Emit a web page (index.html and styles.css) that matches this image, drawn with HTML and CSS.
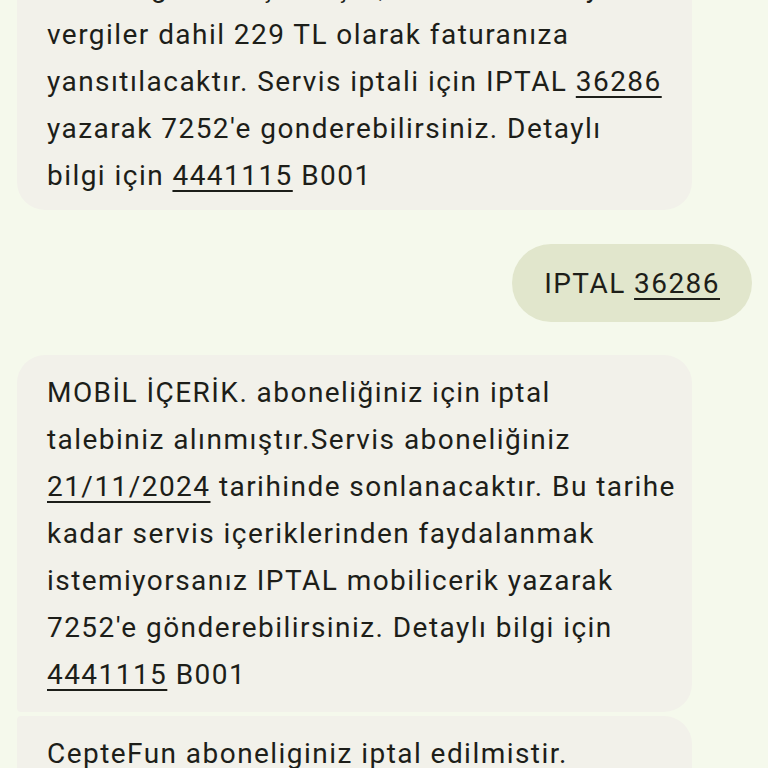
FILE: index.html
```html
<!DOCTYPE html>
<html lang="tr">
<head>
<meta charset="utf-8">
<link rel="stylesheet" href="styles.css">
</head>
<body>
<div class="thread">
  <div class="bubble recv first">
    <p class="msg">Aboneliğiniz başlamıştır, ücret haftalık y<br>vergiler dahil 229 TL olarak faturanıza<br>yansıtılacaktır. Servis iptali için IPTAL <u>36286</u><br>yazarak 7252'e gonderebilirsiniz. Detaylı<br>bilgi için <u>4441115</u> B001</p>
  </div>
  <div class="row-sent">
    <div class="bubble sent"><p class="msg">IPTAL <u>36286</u></p></div>
  </div>
  <div class="group">
    <div class="bubble recv top">
      <p class="msg">MOBİL İÇERİK. aboneliğiniz için iptal<br>talebiniz alınmıştır.Servis aboneliğiniz<br><u>21/11/2024</u> tarihinde sonlanacaktır. Bu tarihe<br>kadar servis içeriklerinden faydalanmak<br>istemiyorsanız IPTAL mobilicerik yazarak<br>7252'e gönderebilirsiniz. Detaylı bilgi için<br><u>4441115</u> B001</p>
    </div>
    <div class="bubble recv bottom">
      <p class="msg">CepteFun aboneliginiz iptal edilmistir.<br>Bilgi için 4441115</p>
    </div>
  </div>
</div>
</body>
</html>
```
FILE: styles.css
```css
html, body {
  margin: 0;
  padding: 0;
  background: #f5f9ec;
  height: 768px;
  overflow: hidden;
}
.thread {
  display: flex;
  flex-direction: column;
  padding: 0 16px 0 17px;
  margin-top: -50px;
}
.msg {
  margin: 0;
  font-family: Roboto, "Noto Sans", sans-serif;
  font-size: 28px;
  letter-spacing: 1.45px;
  line-height: 47px;
  color: #1d1e19;
  white-space: nowrap;
}
.msg u {
  text-decoration-thickness: 2px;
  text-underline-offset: 5px;
}
.bubble {
  box-sizing: border-box;
}
.recv {
  width: 675px;
  background: #f2f1ea;
  padding: 14px 30px;
}
.first {
  border-radius: 28px;
  padding-bottom: 11px;
}
.row-sent {
  display: flex;
  justify-content: flex-end;
  margin-top: 34px;
}
.sent {
  background: #e1e6cc;
  border-radius: 40px;
  height: 78px;
  padding: 0 32px;
  display: flex;
  align-items: center;
}
.group {
  display: flex;
  flex-direction: column;
  gap: 4px;
  margin-top: 33px;
}
.top {
  border-radius: 28px 28px 28px 4px;
}
.bottom {
  border-radius: 4px 28px 28px 28px;
}
```
